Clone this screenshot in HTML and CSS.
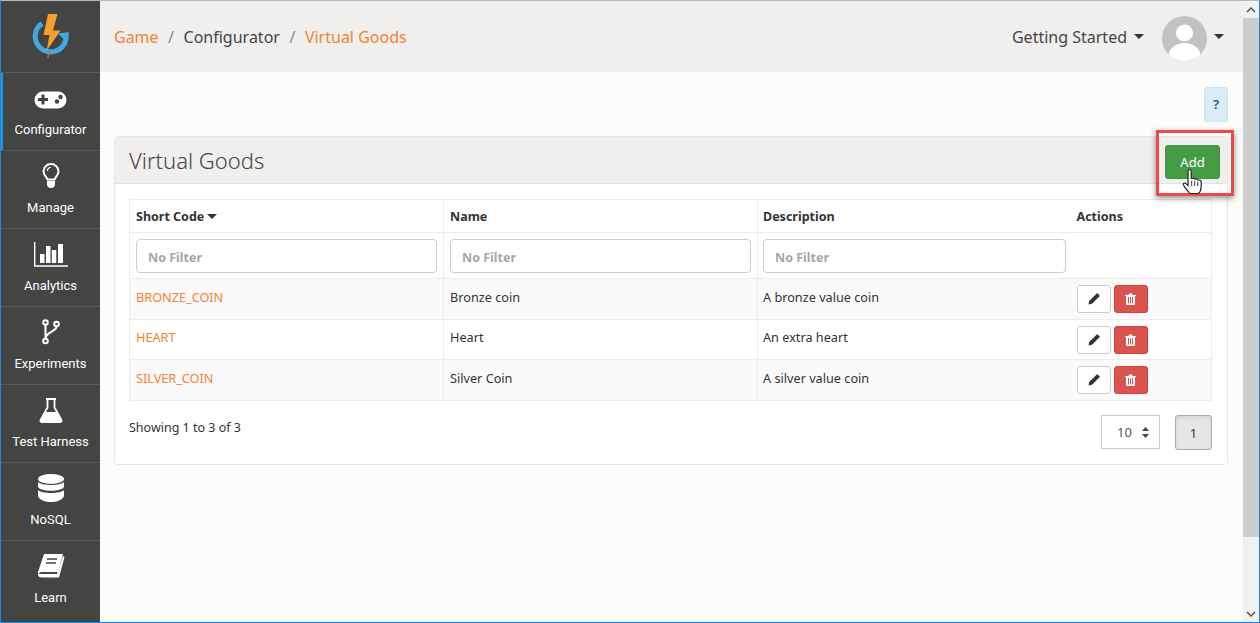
FILE: index.html
```html
<!DOCTYPE html>
<html lang="en">
<head>
  <meta charset="UTF-8">
  <meta name="viewport" content="width=device-width, initial-scale=1.0">
  <title>Virtual Goods</title>
  <link rel="stylesheet" href="styles.css">
</head>
<body>
  <div class="window">
    <nav class="sidebar">
      <div class="logo">
        <svg width="40" height="47" viewBox="0 0 40 47">
          <path d="M11 10.500 A15.500 15.500 0 1 0 35 21" fill="none" stroke="#3fa9e0" stroke-width="5"/>
          <path d="M27 20.500 L38 19 L35.500 29 Z" fill="#3fa9e0"/>
          <path d="M17 1 L26.500 1 L22 17.500 L29.500 17.500 L15.500 38 L18.500 22 L12.500 22 Z" fill="#f5a02c"/>
          <path d="M18.500 38 L16.800 45" stroke="#b07a3a" stroke-width="1.300"/>
        </svg>
      </div>
      <a class="nav-item active">
        <div class="nav-icon">
          <svg width="33" height="18" viewBox="0 0 33 18">
            <rect x="0.500" y="0.500" width="32" height="17" rx="8.500" fill="#fff"/>
            <path d="M7.500 3.500 h3 v3.500 h3.500 v3 h-3.500 v3.500 h-3 v-3.500 h-3.500 v-3 h3.500 z" fill="#444"/>
            <circle cx="23" cy="10.500" r="2.200" fill="#444"/>
            <circle cx="26.500" cy="6" r="2.200" fill="#444"/>
          </svg>
        </div>
        <span>Configurator</span>
      </a>
      <a class="nav-item">
        <div class="nav-icon">
          <svg width="18" height="26" viewBox="0 0 18 26">
            <path d="M5.500 16.500 C4 13 1.500 12 1.500 8.500 A7.500 7.500 0 0 1 16.500 8.500 C16.500 12 14 13 12.500 16.500 Z" fill="none" stroke="#fff" stroke-width="2"/>
            <path d="M5 18 h8 v3 a4 4 0 0 1 -8 0 z" fill="#fff"/>
            <path d="M5.500 8 A3.500 3.500 0 0 1 9 4.500" fill="none" stroke="#fff" stroke-width="1.200"/>
          </svg>
        </div>
        <span>Manage</span>
      </a>
      <a class="nav-item">
        <div class="nav-icon">
          <svg width="34" height="25" viewBox="0 0 34 25">
            <path d="M0.700 0 V24 H34" fill="none" stroke="#fff" stroke-width="1.400"/>
            <path d="M6 12 h4.500 v9 h-4.500 z M12 4 h4.500 v17 h-4.500 z M17.800 8 h4.500 v13 h-4.500 z M24 2 h5 v19 h-5 z" fill="#fff"/>
          </svg>
        </div>
        <span>Analytics</span>
      </a>
      <a class="nav-item">
        <div class="nav-icon">
          <svg width="18" height="26" viewBox="0 0 18 26">
            <g fill="none" stroke="#fff" stroke-width="2">
              <circle cx="3.500" cy="3.500" r="2.300"/>
              <circle cx="14.500" cy="5" r="2.300"/>
              <circle cx="3.500" cy="22" r="2.300"/>
              <path d="M3.500 6 V19.500 M14.500 7.500 C14.500 12.500 5 12 3.500 19"/>
            </g>
          </svg>
        </div>
        <span>Experiments</span>
      </a>
      <a class="nav-item">
        <div class="nav-icon">
          <svg width="24" height="25" viewBox="0 0 24 25">
            <path d="M7 1 h10 M8.500 1 V9.500 L1.500 22 Q1 24 3 24 H21 Q23 24 22.500 22 L15.500 9.500 V1" fill="none" stroke="#fff" stroke-width="1.800"/>
            <path d="M6 14 H18 L22.500 23.500 H1.500 Z" fill="#fff"/>
          </svg>
        </div>
        <span>Test Harness</span>
      </a>
      <a class="nav-item">
        <div class="nav-icon">
          <svg width="26" height="29" viewBox="0 0 26 29">
            <ellipse cx="13" cy="5" rx="13" ry="5" fill="#fff"/>
            <path d="M0 8 C3 12 23 12 26 8 V13 C23 18 3 18 0 13 Z M0 16 C3 20 23 20 26 16 V22 C23 30 3 30 0 22 Z" fill="#fff"/>
          </svg>
        </div>
        <span>NoSQL</span>
      </a>
      <a class="nav-item">
        <div class="nav-icon">
          <svg width="28" height="26" viewBox="0 0 28 26">
            <path d="M7 1 H26 L21 19 H5 Q2 19 1.500 22 L1 19 Z" fill="#fff"/>
            <path d="M3 21 H20 L26 3 L27.500 4 L22 24.500 H5 Q1 24.500 1 21 Z" fill="#fff"/>
            <path d="M10 6 H20 M9 10 H19" stroke="#444" stroke-width="1.500"/>
          </svg>
        </div>
        <span>Learn</span>
      </a>
    </nav>

    <div class="content">
      <header class="topbar">
        <div class="crumbs">
          <a class="link">Game</a><span class="sep">/</span><span>Configurator</span><span class="sep">/</span><a class="link">Virtual Goods</a>
        </div>
        <div class="top-right">
          <span class="started">Getting Started</span>
          <span class="caret"></span>
          <svg class="avatar" width="45" height="45" viewBox="0 0 45 45">
            <defs><clipPath id="round"><circle cx="22.500" cy="22.500" r="22.500"/></clipPath></defs>
            <g clip-path="url(#round)">
              <rect width="45" height="45" fill="#c2c2c2"/>
              <circle cx="22.500" cy="17" r="8.500" fill="#fff"/>
              <ellipse cx="22.500" cy="40" rx="16" ry="13" fill="#fff"/>
            </g>
          </svg>
          <span class="caret"></span>
        </div>
      </header>

      <main class="main">
        <div class="help-row"><button class="help">?</button></div>

        <section class="panel">
          <div class="panel-head">
            <h2>Virtual Goods</h2>
            <div class="add-wrap">
              <button class="add">Add</button>
              <div class="highlight"></div>
              <svg class="hand" width="20" height="25" viewBox="0 0 16.500 23.500" preserveAspectRatio="none">
                <path d="M5 2 Q5 0.500 6.300 0.500 Q7.600 0.500 7.600 2 V9 Q10 8.200 10.500 9.500 Q12.500 9 13 10.500 Q15.500 10 15.800 12 V17 Q15.800 21 13.500 23 H6.500 Q5 21 2.500 17.500 L1 14.500 Q1 12.800 3 13.500 L5 15.500 Z" fill="#fff" stroke="#222" stroke-width="1"/>
                <path d="M8 11 V16 M10.500 11 V16 M13 12 V16" stroke="#222" stroke-width="0.800"/>
              </svg>
            </div>
          </div>
          <div class="panel-body">
            <table class="goods">
              <colgroup>
                <col class="c1"><col class="c2"><col class="c3"><col class="c4">
              </colgroup>
              <thead>
                <tr class="head-row">
                  <th>Short Code<span class="caret small"></span></th>
                  <th>Name</th>
                  <th class="desc">Description</th>
                  <th class="last">Actions</th>
                </tr>
                <tr class="filter-row">
                  <td><input type="text" placeholder="No Filter"></td>
                  <td><input type="text" placeholder="No Filter"></td>
                  <td class="desc"><input type="text" placeholder="No Filter"></td>
                  <td class="last"></td>
                </tr>
              </thead>
              <tbody>
                <tr class="odd">
                  <td><a class="link">BRONZE_COIN</a></td>
                  <td>Bronze coin</td>
                  <td class="desc">A bronze value coin</td>
                  <td class="last actions">
                    <button class="edit"><svg width="12" height="12" viewBox="0 0 12 12"><path d="M8.800 0.500 Q9.300 0.200 9.800 0.600 L11.400 2.200 Q11.800 2.700 11.500 3.200 L4 10.800 L0.500 11.500 L1.200 8 Z" fill="#333"/></svg></button><button class="del"><svg width="11" height="12" viewBox="0 0 11 12"><path d="M0 2 H3.500 L4 0.500 H7 L7.500 2 H11 V3 H10 V11 Q10 12 9 12 H2 Q1 12 1 11 V3 H0 Z M3 4 V10.500 H4 V4 Z M5 4 V10.500 H6 V4 Z M7 4 V10.500 H8 V4 Z" fill="#fff" fill-rule="evenodd"/></svg></button>
                  </td>
                </tr>
                <tr>
                  <td><a class="link">HEART</a></td>
                  <td>Heart</td>
                  <td class="desc">An extra heart</td>
                  <td class="last actions">
                    <button class="edit"><svg width="12" height="12" viewBox="0 0 12 12"><path d="M8.800 0.500 Q9.300 0.200 9.800 0.600 L11.400 2.200 Q11.800 2.700 11.500 3.200 L4 10.800 L0.500 11.500 L1.200 8 Z" fill="#333"/></svg></button><button class="del"><svg width="11" height="12" viewBox="0 0 11 12"><path d="M0 2 H3.500 L4 0.500 H7 L7.500 2 H11 V3 H10 V11 Q10 12 9 12 H2 Q1 12 1 11 V3 H0 Z M3 4 V10.500 H4 V4 Z M5 4 V10.500 H6 V4 Z M7 4 V10.500 H8 V4 Z" fill="#fff" fill-rule="evenodd"/></svg></button>
                  </td>
                </tr>
                <tr class="odd">
                  <td><a class="link">SILVER_COIN</a></td>
                  <td>Silver Coin</td>
                  <td class="desc">A silver value coin</td>
                  <td class="last actions">
                    <button class="edit"><svg width="12" height="12" viewBox="0 0 12 12"><path d="M8.800 0.500 Q9.300 0.200 9.800 0.600 L11.400 2.200 Q11.800 2.700 11.500 3.200 L4 10.800 L0.500 11.500 L1.200 8 Z" fill="#333"/></svg></button><button class="del"><svg width="11" height="12" viewBox="0 0 11 12"><path d="M0 2 H3.500 L4 0.500 H7 L7.500 2 H11 V3 H10 V11 Q10 12 9 12 H2 Q1 12 1 11 V3 H0 Z M3 4 V10.500 H4 V4 Z M5 4 V10.500 H6 V4 Z M7 4 V10.500 H8 V4 Z" fill="#fff" fill-rule="evenodd"/></svg></button>
                  </td>
                </tr>
              </tbody>
            </table>
            <div class="table-foot">
              <span class="showing">Showing 1 to 3 of 3</span>
              <div class="paging">
                <div class="page-size"><span>10</span><svg width="7" height="11" viewBox="0 0 7 11"><path d="M3.500 0 L7 4 H0 Z M3.500 11 L7 7 H0 Z" fill="#444"/></svg></div>
                <button class="page">1</button>
              </div>
            </div>
          </div>
        </section>
      </main>
    </div>

    <div class="scrollbar">
      <div class="arrow"><svg width="10" height="6" viewBox="0 0 10 6"><path d="M1 5 L5 1 L9 5" fill="none" stroke="#555" stroke-width="1.500"/></svg></div>
      <div class="thumb"></div>
      <div class="arrow down"><svg width="10" height="6" viewBox="0 0 10 6"><path d="M1 1 L5 5 L9 1" fill="none" stroke="#555" stroke-width="1.500"/></svg></div>
    </div>
  </div>
</body>
</html>
```

FILE: styles.css
```css
html, body {
  margin: 0;
  padding: 0;
  height: 623px;
  overflow: hidden;
}

body {
  font-family: "Noto Sans", sans-serif;
  color: #333;
  font-size: 13px;
}

button {
  font-family: inherit;
  cursor: pointer;
}

.window {
  display: flex;
  box-sizing: border-box;
  height: 623px;
  border-top: 1px solid #b9b9b9;
  border-left: 1px solid #1f86d8;
  border-right: 1px solid #1f86d8;
  border-bottom: 1px solid #1f86d8;
}

.sidebar {
  width: 99px;
  flex: none;
  background: #444443;
  display: flex;
  flex-direction: column;
  overflow: hidden;
}

.logo {
  height: 71px;
  flex: none;
  display: flex;
  align-items: center;
  justify-content: center;
}

.nav-item {
  height: 78px;
  flex: none;
  box-sizing: border-box;
  border-top: 1px solid #5a5a59;
  display: flex;
  flex-direction: column;
  align-items: center;
  color: #fff;
  font-family: Roboto, sans-serif;
  font-size: 13px;
}

.nav-icon {
  height: 32px;
  margin-top: 9px;
  display: flex;
  align-items: center;
  justify-content: center;
}

.nav-item span {
  margin-top: 8px;
}

.nav-item.active {
  box-shadow: inset 2px 0 #1f94e8;
}

.nav-item.active svg {
  margin-top: 3px;
}

.content {
  flex: 1;
  min-width: 0;
  background: #fcfcfa;
  display: flex;
  flex-direction: column;
}

.topbar {
  height: 71px;
  flex: none;
  background: #f0efee;
  display: flex;
  align-items: center;
  justify-content: space-between;
  padding: 0 19px 0 14px;
  font-size: 16px;
  color: #444;
}

.crumbs {
  display: flex;
  align-items: center;
}

.sep {
  color: #8a8a8a;
  margin: 0 9.500px;
}

.link {
  color: #f58232;
}

.top-right {
  display: flex;
  align-items: center;
}

.caret {
  display: inline-block;
  width: 0;
  height: 0;
  border-left: 5px solid transparent;
  border-right: 5px solid transparent;
  border-top: 5px solid #333;
  margin-left: 7px;
}

.caret.small {
  margin-left: 3px;
  vertical-align: 2px;
}

.avatar {
  margin: 4px 0 0 18px;
}

.main {
  flex: 1;
  padding: 15px 15px 0 14px;
}

.help-row {
  display: flex;
  justify-content: flex-end;
  height: 35px;
  margin-bottom: 14px;
}

.help {
  width: 24px;
  height: 35px;
  padding: 0 0 2px;
  background: #d9edf7;
  border: 1px solid #bce8f1;
  border-radius: 3px;
  color: #31708f;
  font-weight: 700;
  font-size: 13px;
}

.panel {
  border: 1px solid #e6e6e6;
  border-radius: 4px;
  background: #fff;
}

.panel-head {
  height: 47px;
  box-sizing: border-box;
  background: #f0efee;
  border-bottom: 1px solid #e2e2e2;
  display: flex;
  align-items: center;
  justify-content: space-between;
  padding: 0 7px 0 14px;
}

.panel-head h2 {
  margin: 0;
  font-size: 22px;
  font-weight: 300;
  color: #444;
}

.add-wrap {
  position: relative;
  margin-top: 3px;
}

.add {
  display: block;
  width: 55px;
  height: 34px;
  background: #449d44;
  border: 1px solid #419641;
  border-radius: 3px;
  color: #fff;
  font-size: 13px;
  padding: 0;
}

.highlight {
  position: absolute;
  left: -9px;
  top: -15px;
  width: 72px;
  height: 60px;
  border: 3px solid #f04848;
  box-shadow: 0 2px 6px rgba(0, 0, 0, 0.45);
}

.hand {
  position: absolute;
  left: 17px;
  top: 24px;
}

.panel-body {
  padding: 15px 15px 14px 14px;
}

.goods {
  width: 1083px;
  border-collapse: collapse;
  table-layout: fixed;
  font-size: 12.700px;
}

.c1, .c2, .c3 { width: 314px; }

.goods th, .goods td {
  border: 1px solid #ececec;
  padding: 0 6px;
  text-align: left;
}

.goods .desc {
  padding-left: 5px;
  border-right: 0;
}

.goods .last {
  border-left: 0;
  padding-left: 5px;
}

.head-row { height: 33px; }
.goods th { font-weight: 700; font-size: 12.500px; }

.filter-row { height: 46px; }

.filter-row input {
  box-sizing: border-box;
  display: block;
  width: 100%;
  height: 34px;
  border: 1px solid #ccc;
  border-radius: 4px;
  padding: 3px 11px 0;
  font-family: inherit;
  font-size: 12.500px;
  font-weight: 700;
  background: #fff;
}

.filter-row input::placeholder {
  color: #a6a6a6;
  opacity: 1;
}

.goods tbody tr { height: 40px; }
.goods tbody tr.odd { height: 41px; background: #fafafa; }
.goods tbody td { padding-bottom: 5px; }
.goods tbody td.actions { padding-bottom: 0; }

.actions button {
  width: 34px;
  height: 28px;
  border-radius: 3px;
  padding: 0;
  vertical-align: middle;
  display: inline-flex;
  align-items: center;
  justify-content: center;
}

.edit {
  background: #fff;
  border: 1px solid #ccc;
}

.del {
  background: #d9534f;
  border: 1px solid #d43f3a;
  margin-left: 3px;
}

.table-foot {
  display: flex;
  justify-content: space-between;
  align-items: flex-start;
  margin-top: 14px;
}

.showing {
  margin-top: 4px;
  font-size: 12.500px;
}

.paging {
  display: flex;
  gap: 15px;
}

.page-size {
  box-sizing: border-box;
  width: 59px;
  height: 34px;
  border: 1px solid #ccc;
  background: #fff;
  display: flex;
  align-items: center;
  gap: 10px;
  padding-left: 15px;
  color: #555;
}

.page {
  width: 37px;
  height: 35px;
  padding: 0;
  background: #e6e6e6;
  border: 1px solid #adadad;
  border-radius: 3px;
  box-shadow: inset 0 2px 4px rgba(0, 0, 0, 0.08);
  color: #333;
  font-size: 13px;
}

.scrollbar {
  width: 16px;
  flex: none;
  background: #f1f1f1;
  display: flex;
  flex-direction: column;
}

.arrow {
  height: 17px;
  flex: none;
  display: flex;
  align-items: center;
  justify-content: center;
}

.arrow.down {
  margin-top: auto;
}

.thumb {
  height: 519px;
  background: #cdcdcd;
}
```
